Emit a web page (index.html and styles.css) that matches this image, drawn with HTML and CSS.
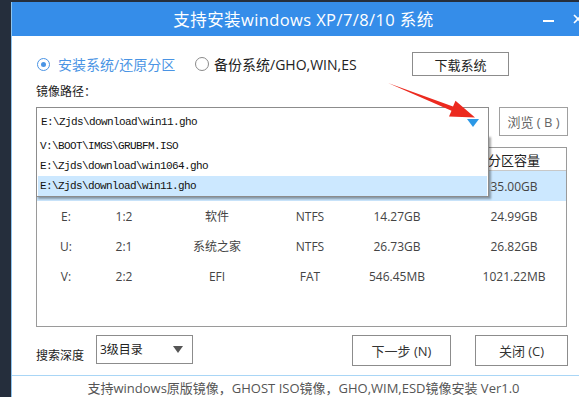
FILE: index.html
```html
<!DOCTYPE html>
<html lang="zh-CN">
<head>
  <meta charset="UTF-8">
  <title>支持安装windows XP/7/8/10 系统</title>
  <link rel="stylesheet" href="styles.css">
</head>
<body>

  <div class="window">
    <div class="titlebar">
      <h1 class="title">支持安装windows XP/7/8/10 系统</h1>
      <div class="controls">
        <span class="min"></span>
        <svg class="close" width="10" height="10" viewBox="0 0 10 10">
          <path d="M1 1L9 9M9 1L1 9" stroke="#fff" stroke-width="1.6"/>
        </svg>
      </div>
    </div>

    <div class="content">
      <div class="mode-row">
        <label class="radio checked"><span class="dot"></span>安装系统/还原分区</label>
        <label class="radio"><span class="dot"></span>备份系统/GHO,WIN,ES</label>
        <button class="btn btn-download">下载系统</button>
      </div>

      <div class="field-label">镜像路径：</div>

      <div class="path-row">
        <div class="combo">
          <span class="combo-text">E:\Zjds\download\win11.gho</span>
          <span class="combo-arrow"></span>
          <ul class="combo-list">
            <li>V:\BOOT\IMGS\GRUBFM.ISO</li>
            <li>E:\Zjds\download\win1064.gho</li>
            <li class="selected">E:\Zjds\download\win11.gho</li>
          </ul>
        </div>
        <button class="btn btn-browse">浏览 ( B )</button>
      </div>

      <!-- the first columns of the header and first row sit under the open list -->
      <div class="part-table">
        <div class="part-row part-head">
          <span></span><span></span><span></span><span></span><span></span><span>分区容量</span>
        </div>
        <div class="part-row active">
          <span></span><span></span><span></span><span></span><span></span><span>35.00GB</span>
        </div>
        <div class="part-row">
          <span>E:</span><span>1:2</span><span>软件</span><span>NTFS</span><span>14.27GB</span><span>24.99GB</span>
        </div>
        <div class="part-row">
          <span>U:</span><span>2:1</span><span>系统之家</span><span>NTFS</span><span>26.73GB</span><span>26.82GB</span>
        </div>
        <div class="part-row">
          <span>V:</span><span>2:2</span><span>EFI</span><span>FAT</span><span>546.45MB</span><span>1021.22MB</span>
        </div>
      </div>

      <div class="action-row">
        <span class="depth-label">搜索深度</span>
        <div class="select">
          <span>3级目录</span>
          <span class="select-arrow"></span>
        </div>
        <button class="btn btn-action btn-next">下一步 (N)</button>
        <button class="btn btn-action btn-close">关闭 (C)</button>
      </div>
    </div>

    <div class="footer">支持windows原版镜像，GHOST ISO镜像，GHO,WIM,ESD镜像安装 Ver1.0</div>
  </div>

  <!-- red annotation arrow pointing to the dropdown -->
  <svg class="annot" width="579" height="397" viewBox="0 0 579 397">
    <polygon points="388,83 453,106.6 455.5,100.8 475,117.5 449,116.5 451.5,110.8" fill="#ec2a1f"/>
  </svg>

</body>
</html>
```

FILE: styles.css
```css
* {
  box-sizing: border-box;
}
body {
  margin: 0;
  background-color: #252e3c;
  overflow: hidden;
  font-family: "Open Sans", "Noto Sans CJK SC", sans-serif;
  color: #222;
}
.window {
  margin: 2px 0 0 11px;
  width: 584px;
  height: 395px;
  background-color: #fff;
  border-left: 1px solid #8ec4ef;
}
.titlebar {
  height: 34px;
  background-color: #358de9;
  display: grid;
  grid-template-columns: 1fr auto 1fr;
  align-items: center;
  color: #fff;
}
.title {
  grid-column: 2;
  margin: 0;
  font-size: 16.5px;
  font-weight: normal;
  letter-spacing: 0.4px;
}
.controls {
  justify-self: end;
  display: flex;
  align-items: center;
  gap: 19px;
  padding-right: 12px;
}
.min {
  width: 11px;
  height: 2px;
  background-color: #fff;
  margin-top: 3px;
}
.close {
  display: block;
}
.content {
  padding: 16px 0 0 24px;
}

/* radio row */
.mode-row {
  display: grid;
  grid-template-columns: 159px 217px 97px;
  align-items: center;
  height: 24px;
}
.radio {
  display: flex;
  align-items: center;
  font-size: 14px;
  color: #222;
}
.radio .dot {
  width: 14px;
  height: 14px;
  border: 1px solid #8a8a8a;
  border-radius: 50%;
  margin-right: 5px;
  display: flex;
  align-items: center;
  justify-content: center;
}
.radio.checked {
  color: #4a94e4;
  padding-left: 1px;
}
.radio.checked .dot {
  width: 13px;
  height: 13px;
  border-color: #4a94e4;
  margin-right: 8px;
}
.radio.checked .dot::after {
  content: "";
  width: 5px;
  height: 5px;
  border-radius: 50%;
  background-color: #4a94e4;
}
.btn {
  font-family: inherit;
  background-color: #fff;
  border: 1px solid #8c8c8c;
  color: #222;
  padding: 0;
  cursor: pointer;
}
.btn-download {
  height: 24px;
  font-size: 13px;
}

.field-label {
  margin-top: 8px;
  font-size: 12px;
  line-height: 16px;
}

/* image path combo */
.path-row {
  display: flex;
  gap: 10px;
  margin-top: 7px;
}
.combo {
  position: relative;
  width: 453px;
  height: 29px;
  border: 1px solid #8c8c8c;
  display: flex;
  align-items: center;
  padding: 0 9px 0 4px;
}
.combo-text,
.combo-list li {
  font-family: "Liberation Mono", monospace;
  font-size: 11px;
  letter-spacing: -0.6px;
  color: #111;
}
.combo-text {
  flex: 1;
}
.combo-arrow {
  width: 0;
  height: 0;
  border-left: 6px solid transparent;
  border-right: 6px solid transparent;
  border-top: 8px solid #2b98e6;
  margin-top: 2px;
}
.combo-list {
  position: absolute;
  top: 100%;
  left: -1px;
  width: 453px;
  margin: 0;
  padding: 1px 1px 0;
  list-style: none;
  background-color: #fff;
  border: 1px solid #8c8c8c;
  border-top: none;
  box-shadow: 2px 2px 2px rgba(0,0,0,0.35);
  z-index: 2;
}
.combo-list li {
  height: 20px;
  line-height: 20px;
  padding-left: 2px;
}
.combo-list li.selected {
  background-color: #cce8ff;
}
.btn-browse {
  width: 69px;
  height: 29px;
  font-size: 13px;
  color: #666;
  border-color: #a0a0a0;
}

/* partition table */
.part-table {
  margin-top: 11px;
  width: 531px;
  height: 180px;
  border: 1px solid #9a9a9a;
  font-size: 12px;
  color: #444;
}
.part-row {
  display: grid;
  grid-template-columns: 58px 58px 128px 58px 116px 1fr;
  height: 30px;
  align-items: center;
  text-align: center;
}
.part-row span:last-child {
  padding-left: 7px;
}
.part-head {
  height: 23px;
  border-bottom: 1px solid #c8c8c8;
  color: #222;
  font-size: 13px;
}
.part-row.active {
  background-color: #cce8ff;
}

/* bottom actions */
.action-row {
  display: flex;
  align-items: flex-start;
  width: 532px;
  margin-top: 8px;
}
.depth-label {
  width: 60px;
  font-size: 12px;
  margin-top: 11px;
}
.select {
  width: 97px;
  height: 29px;
  border: 1px solid #8c8c8c;
  display: flex;
  align-items: center;
  justify-content: space-between;
  padding: 0 9px 2px 3px;
  font-size: 12px;
}
.select-arrow {
  width: 0;
  height: 0;
  border-left: 5px solid transparent;
  border-right: 5px solid transparent;
  border-top: 7px solid #555;
  margin-top: 2px;
}
.btn-action {
  height: 31px;
  font-size: 13px;
  color: #333;
}
.btn-next {
  width: 99px;
  margin-left: auto;
}
.btn-close {
  width: 93px;
  margin-left: 24px;
}

.footer {
  margin-top: 9px;
  border-top: 1px solid #a9d6f6;
  text-align: center;
  font-size: 13px;
  line-height: 24px;
  color: #555;
}

.annot {
  position: absolute;
  top: 0;
  left: 0;
  pointer-events: none;
}
```
